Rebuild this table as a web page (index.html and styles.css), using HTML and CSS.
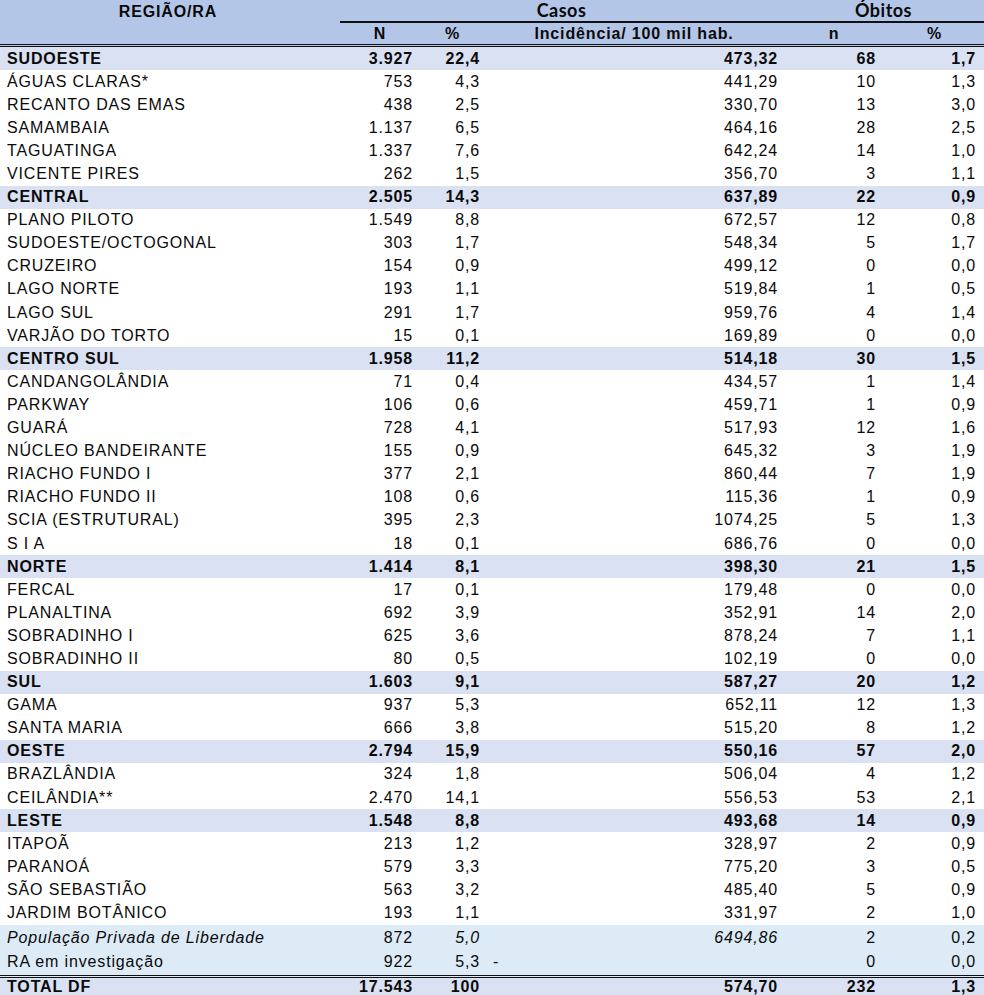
FILE: index.html
```html
<!DOCTYPE html>
<html lang="pt-BR">
<head>
<meta charset="utf-8">
<title>Casos e óbitos por Região/RA</title>
<link rel="stylesheet" href="styles.css">
</head>
<body>
<div class="sheet">
  <div class="head1">
    <div class="h-region">REGIÃO/RA</div>
    <div class="h-groups">
      <div class="h-group">Casos</div>
      <div class="h-group">Óbitos</div>
    </div>
  </div>
  <div class="row head2">
    <div></div>
    <div class="c">N</div>
    <div class="c">%</div>
    <div class="c">Incidência/ 100 mil hab.</div>
    <div class="c">n</div>
    <div class="c">%</div>
  </div>

  <div class="row reg"><div>SUDOESTE</div><div>3.927</div><div>22,4</div><div>473,32</div><div>68</div><div>1,7</div></div>
  <div class="row"><div>ÁGUAS CLARAS*</div><div>753</div><div>4,3</div><div>441,29</div><div>10</div><div>1,3</div></div>
  <div class="row"><div>RECANTO DAS EMAS</div><div>438</div><div>2,5</div><div>330,70</div><div>13</div><div>3,0</div></div>
  <div class="row"><div>SAMAMBAIA</div><div>1.137</div><div>6,5</div><div>464,16</div><div>28</div><div>2,5</div></div>
  <div class="row"><div>TAGUATINGA</div><div>1.337</div><div>7,6</div><div>642,24</div><div>14</div><div>1,0</div></div>
  <div class="row"><div>VICENTE PIRES</div><div>262</div><div>1,5</div><div>356,70</div><div>3</div><div>1,1</div></div>

  <div class="row reg"><div>CENTRAL</div><div>2.505</div><div>14,3</div><div>637,89</div><div>22</div><div>0,9</div></div>
  <div class="row"><div>PLANO PILOTO</div><div>1.549</div><div>8,8</div><div>672,57</div><div>12</div><div>0,8</div></div>
  <div class="row"><div>SUDOESTE/OCTOGONAL</div><div>303</div><div>1,7</div><div>548,34</div><div>5</div><div>1,7</div></div>
  <div class="row"><div>CRUZEIRO</div><div>154</div><div>0,9</div><div>499,12</div><div>0</div><div>0,0</div></div>
  <div class="row"><div>LAGO NORTE</div><div>193</div><div>1,1</div><div>519,84</div><div>1</div><div>0,5</div></div>
  <div class="row"><div>LAGO SUL</div><div>291</div><div>1,7</div><div>959,76</div><div>4</div><div>1,4</div></div>
  <div class="row"><div>VARJÃO DO TORTO</div><div>15</div><div>0,1</div><div>169,89</div><div>0</div><div>0,0</div></div>

  <div class="row reg"><div>CENTRO SUL</div><div>1.958</div><div>11,2</div><div>514,18</div><div>30</div><div>1,5</div></div>
  <div class="row"><div>CANDANGOLÂNDIA</div><div>71</div><div>0,4</div><div>434,57</div><div>1</div><div>1,4</div></div>
  <div class="row"><div>PARKWAY</div><div>106</div><div>0,6</div><div>459,71</div><div>1</div><div>0,9</div></div>
  <div class="row"><div>GUARÁ</div><div>728</div><div>4,1</div><div>517,93</div><div>12</div><div>1,6</div></div>
  <div class="row"><div>NÚCLEO BANDEIRANTE</div><div>155</div><div>0,9</div><div>645,32</div><div>3</div><div>1,9</div></div>
  <div class="row"><div>RIACHO FUNDO I</div><div>377</div><div>2,1</div><div>860,44</div><div>7</div><div>1,9</div></div>
  <div class="row"><div>RIACHO FUNDO II</div><div>108</div><div>0,6</div><div>115,36</div><div>1</div><div>0,9</div></div>
  <div class="row"><div>SCIA (ESTRUTURAL)</div><div>395</div><div>2,3</div><div>1074,25</div><div>5</div><div>1,3</div></div>
  <div class="row"><div>S I A</div><div>18</div><div>0,1</div><div>686,76</div><div>0</div><div>0,0</div></div>

  <div class="row reg"><div>NORTE</div><div>1.414</div><div>8,1</div><div>398,30</div><div>21</div><div>1,5</div></div>
  <div class="row"><div>FERCAL</div><div>17</div><div>0,1</div><div>179,48</div><div>0</div><div>0,0</div></div>
  <div class="row"><div>PLANALTINA</div><div>692</div><div>3,9</div><div>352,91</div><div>14</div><div>2,0</div></div>
  <div class="row"><div>SOBRADINHO I</div><div>625</div><div>3,6</div><div>878,24</div><div>7</div><div>1,1</div></div>
  <div class="row"><div>SOBRADINHO II</div><div>80</div><div>0,5</div><div>102,19</div><div>0</div><div>0,0</div></div>

  <div class="row reg"><div>SUL</div><div>1.603</div><div>9,1</div><div>587,27</div><div>20</div><div>1,2</div></div>
  <div class="row"><div>GAMA</div><div>937</div><div>5,3</div><div>652,11</div><div>12</div><div>1,3</div></div>
  <div class="row"><div>SANTA MARIA</div><div>666</div><div>3,8</div><div>515,20</div><div>8</div><div>1,2</div></div>

  <div class="row reg"><div>OESTE</div><div>2.794</div><div>15,9</div><div>550,16</div><div>57</div><div>2,0</div></div>
  <div class="row"><div>BRAZLÂNDIA</div><div>324</div><div>1,8</div><div>506,04</div><div>4</div><div>1,2</div></div>
  <div class="row"><div>CEILÂNDIA**</div><div>2.470</div><div>14,1</div><div>556,53</div><div>53</div><div>2,1</div></div>

  <div class="row reg"><div>LESTE</div><div>1.548</div><div>8,8</div><div>493,68</div><div>14</div><div>0,9</div></div>
  <div class="row"><div>ITAPOÃ</div><div>213</div><div>1,2</div><div>328,97</div><div>2</div><div>0,9</div></div>
  <div class="row"><div>PARANOÁ</div><div>579</div><div>3,3</div><div>775,20</div><div>3</div><div>0,5</div></div>
  <div class="row"><div>SÃO SEBASTIÃO</div><div>563</div><div>3,2</div><div>485,40</div><div>5</div><div>0,9</div></div>
  <div class="row"><div>JARDIM BOTÂNICO</div><div>193</div><div>1,1</div><div>331,97</div><div>2</div><div>1,0</div></div>

  <div class="row extra"><div class="it">População Privada de Liberdade</div><div>872</div><div class="it">5,0</div><div class="it">6494,86</div><div>2</div><div>0,2</div></div>
  <div class="row extra last"><div>RA em investigação</div><div>922</div><div>5,3</div><div class="dash">-</div><div>0</div><div>0,0</div></div>

  <div class="row reg total"><div>TOTAL DF</div><div>17.543</div><div>100</div><div>574,70</div><div>232</div><div>1,3</div></div>
</div>
</body>
</html>
```

FILE: styles.css
```css
html, body {
  margin: 0;
  padding: 0;
  background: #ffffff;
}

.sheet {
  width: 984px;
  font-family: "Liberation Sans", Arial, sans-serif;
  font-size: 16px;
  letter-spacing: 0.85px;
  color: #0a0a0a;
}

.head1 {
  display: grid;
  grid-template-columns: 340px 1fr;
  height: 23px;
  background: #b4c6e7;
}

.h-region {
  font-weight: bold;
  text-align: center;
  line-height: 23px;
  padding-right: 4px;
}

.h-groups {
  display: grid;
  grid-template-columns: 443px 1fr;
  border-bottom: 2px solid #111;
  height: 21px;
}

.h-group {
  font-family: Lato, "Open Sans", sans-serif;
  font-weight: bold;
  font-size: 18px;
  letter-spacing: 0.5px;
  text-align: center;
  line-height: 21px;
}

.row {
  display: grid;
  grid-template-columns: 340px 80px 65px 298px 102px 99px;
  height: 23.1px;
  align-items: center;
  box-sizing: border-box;
}

.row > div {
  text-align: right;
  white-space: nowrap;
}

.row > div:nth-child(1) { text-align: left; padding-left: 7px; }
.row > div:nth-child(2) { padding-right: 7px; }
.row > div:nth-child(3) { padding-right: 5px; }
.row > div:nth-child(4) { padding-right: 5px; }
.row > div:nth-child(5) { padding-right: 9px; }
.row > div:nth-child(6) { padding-right: 8px; }

.head2 {
  background: #b4c6e7;
  height: 24px;
  border-bottom: 3px double #111;
  font-weight: bold;
  padding-top: 1px;
}

.row.head2 > div.c {
  text-align: center;
  padding: 0;
}

.reg {
  background: #d9e1f2;
  font-weight: bold;
}

.extra {
  background: #ddebf7;
  height: 25px;
  padding-top: 2px;
}

.extra.last {
  height: 28px;
  padding-top: 0;
  border-bottom: 3px double #111;
}

.it {
  font-style: italic;
}

.row > div.dash {
  text-align: left;
  padding-left: 8px;
}

.total {
  height: 17px;
  align-items: start;
}
```
